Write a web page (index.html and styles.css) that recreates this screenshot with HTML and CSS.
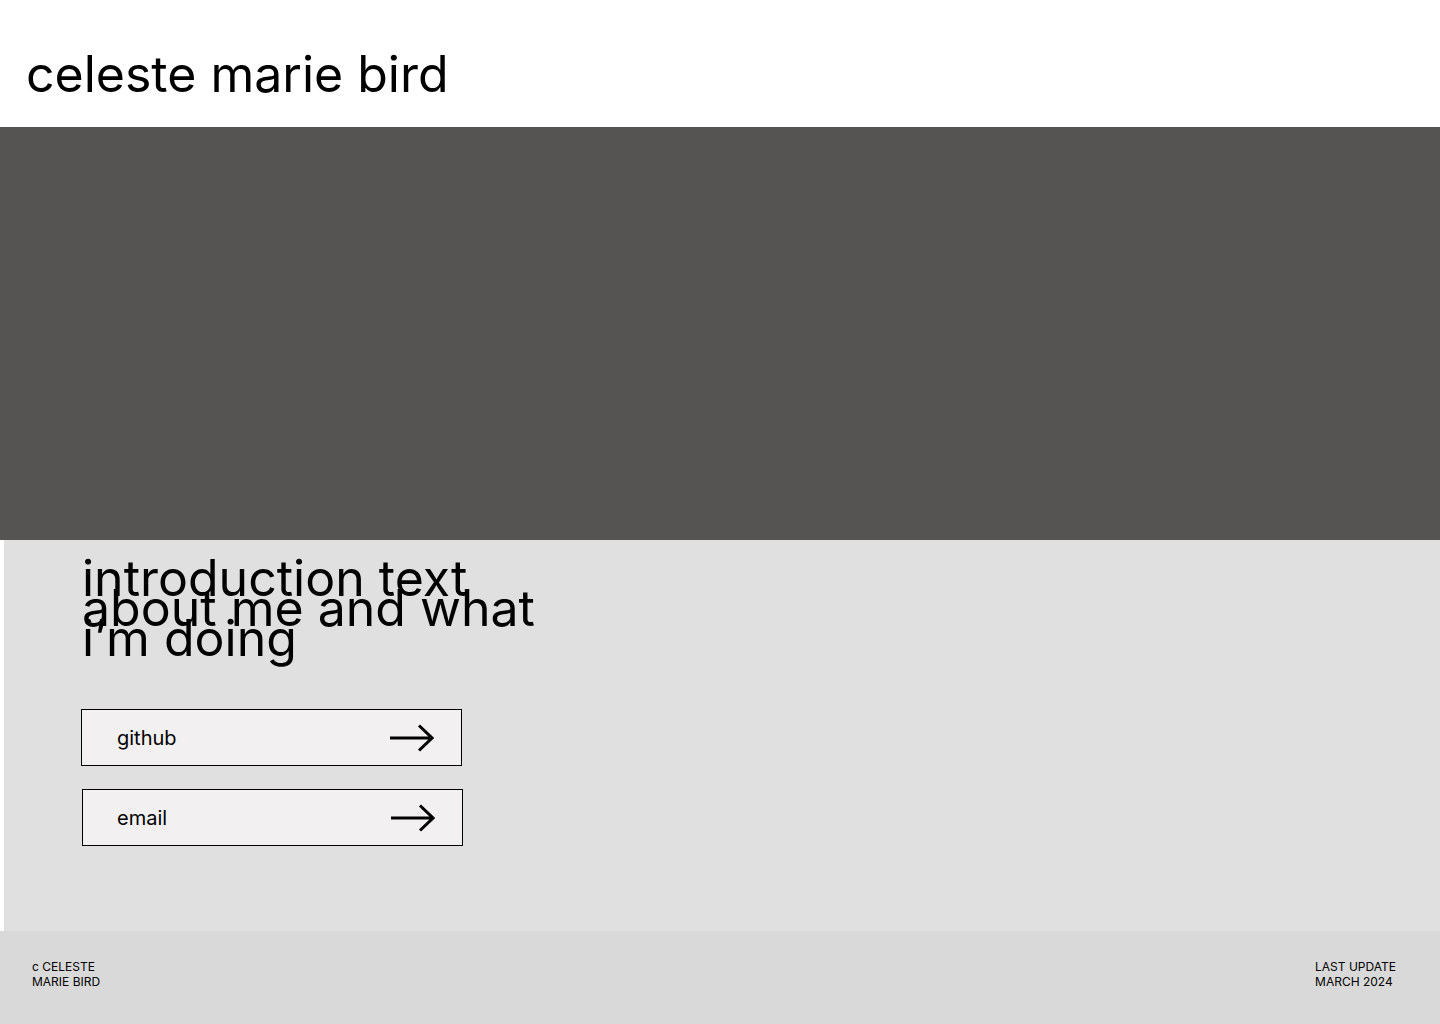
FILE: index.html
```html
<!DOCTYPE html>
<html lang="en">
<head>
<meta charset="utf-8">
<title>celeste marie bird</title>
<link rel="stylesheet" href="styles.css">
</head>
<body>
<header class="site-header">
  <h1 class="site-title">celeste marie bird</h1>
</header>
<div class="hero"></div>
<main class="intro">
  <p class="intro-text">introduction text about me and what i’m doing</p>
  <div class="links">
    <a class="link-btn" href="#">
      <span>github</span>
      <svg class="arrow" width="44" height="28" viewBox="0 0 44 28"><path d="M0 14H42M29 1.5L42 14L29 26.5" fill="none" stroke="#000" stroke-width="3"/></svg>
    </a>
    <a class="link-btn second" href="#">
      <span>email</span>
      <svg class="arrow" width="44" height="28" viewBox="0 0 44 28"><path d="M0 14H42M29 1.5L42 14L29 26.5" fill="none" stroke="#000" stroke-width="3"/></svg>
    </a>
  </div>
</main>
<footer class="site-footer">
  <div class="foot-left">c CELESTE<br>MARIE BIRD</div>
  <div class="foot-right">LAST UPDATE<br>MARCH 2024</div>
</footer>
</body>
</html>
```
FILE: styles.css
```css
* { box-sizing: border-box; }
html, body { margin: 0; padding: 0; }
body {
  font-family: Inter, "Noto Sans", sans-serif;
  color: #000;
  background: #fff;
  width: 1440px;
}
.site-header {
  height: 127px;
  padding: 44px 0 0 26px;
}
.site-title {
  margin: 0;
  font-size: 50px;
  font-weight: 400;
  line-height: 60px;
}
.hero {
  height: 413px;
  background: #555452;
}
.intro {
  margin-left: 4px;
  height: 391px;
  background: #e0e0e0;
  padding: 12px 0 0 78px;
}
.intro-text {
  margin: 0;
  width: 480px;
  font-size: 50px;
  line-height: 30px;
  padding-top: 11px;
}
.links {
  display: flex;
  flex-direction: column;
  gap: 23px;
  margin-top: 56px;
}
.link-btn {
  display: flex;
  align-items: center;
  justify-content: space-between;
  width: 381px;
  height: 57px;
  border: 1px solid #000;
  background: #f2f0f1;
  color: #000;
  text-decoration: none;
  font-size: 20px;
  padding: 0 27px 0 35px;
  margin-left: -1px;
}
.link-btn.second { margin-left: 0; padding-left: 34px; }
.arrow { display: block; }
.site-footer {
  height: 93px;
  background: #d9d9d9;
  display: flex;
  justify-content: space-between;
  padding: 28px 44px 0 32px;
  font-size: 12px;
  line-height: 15px;
}
```
